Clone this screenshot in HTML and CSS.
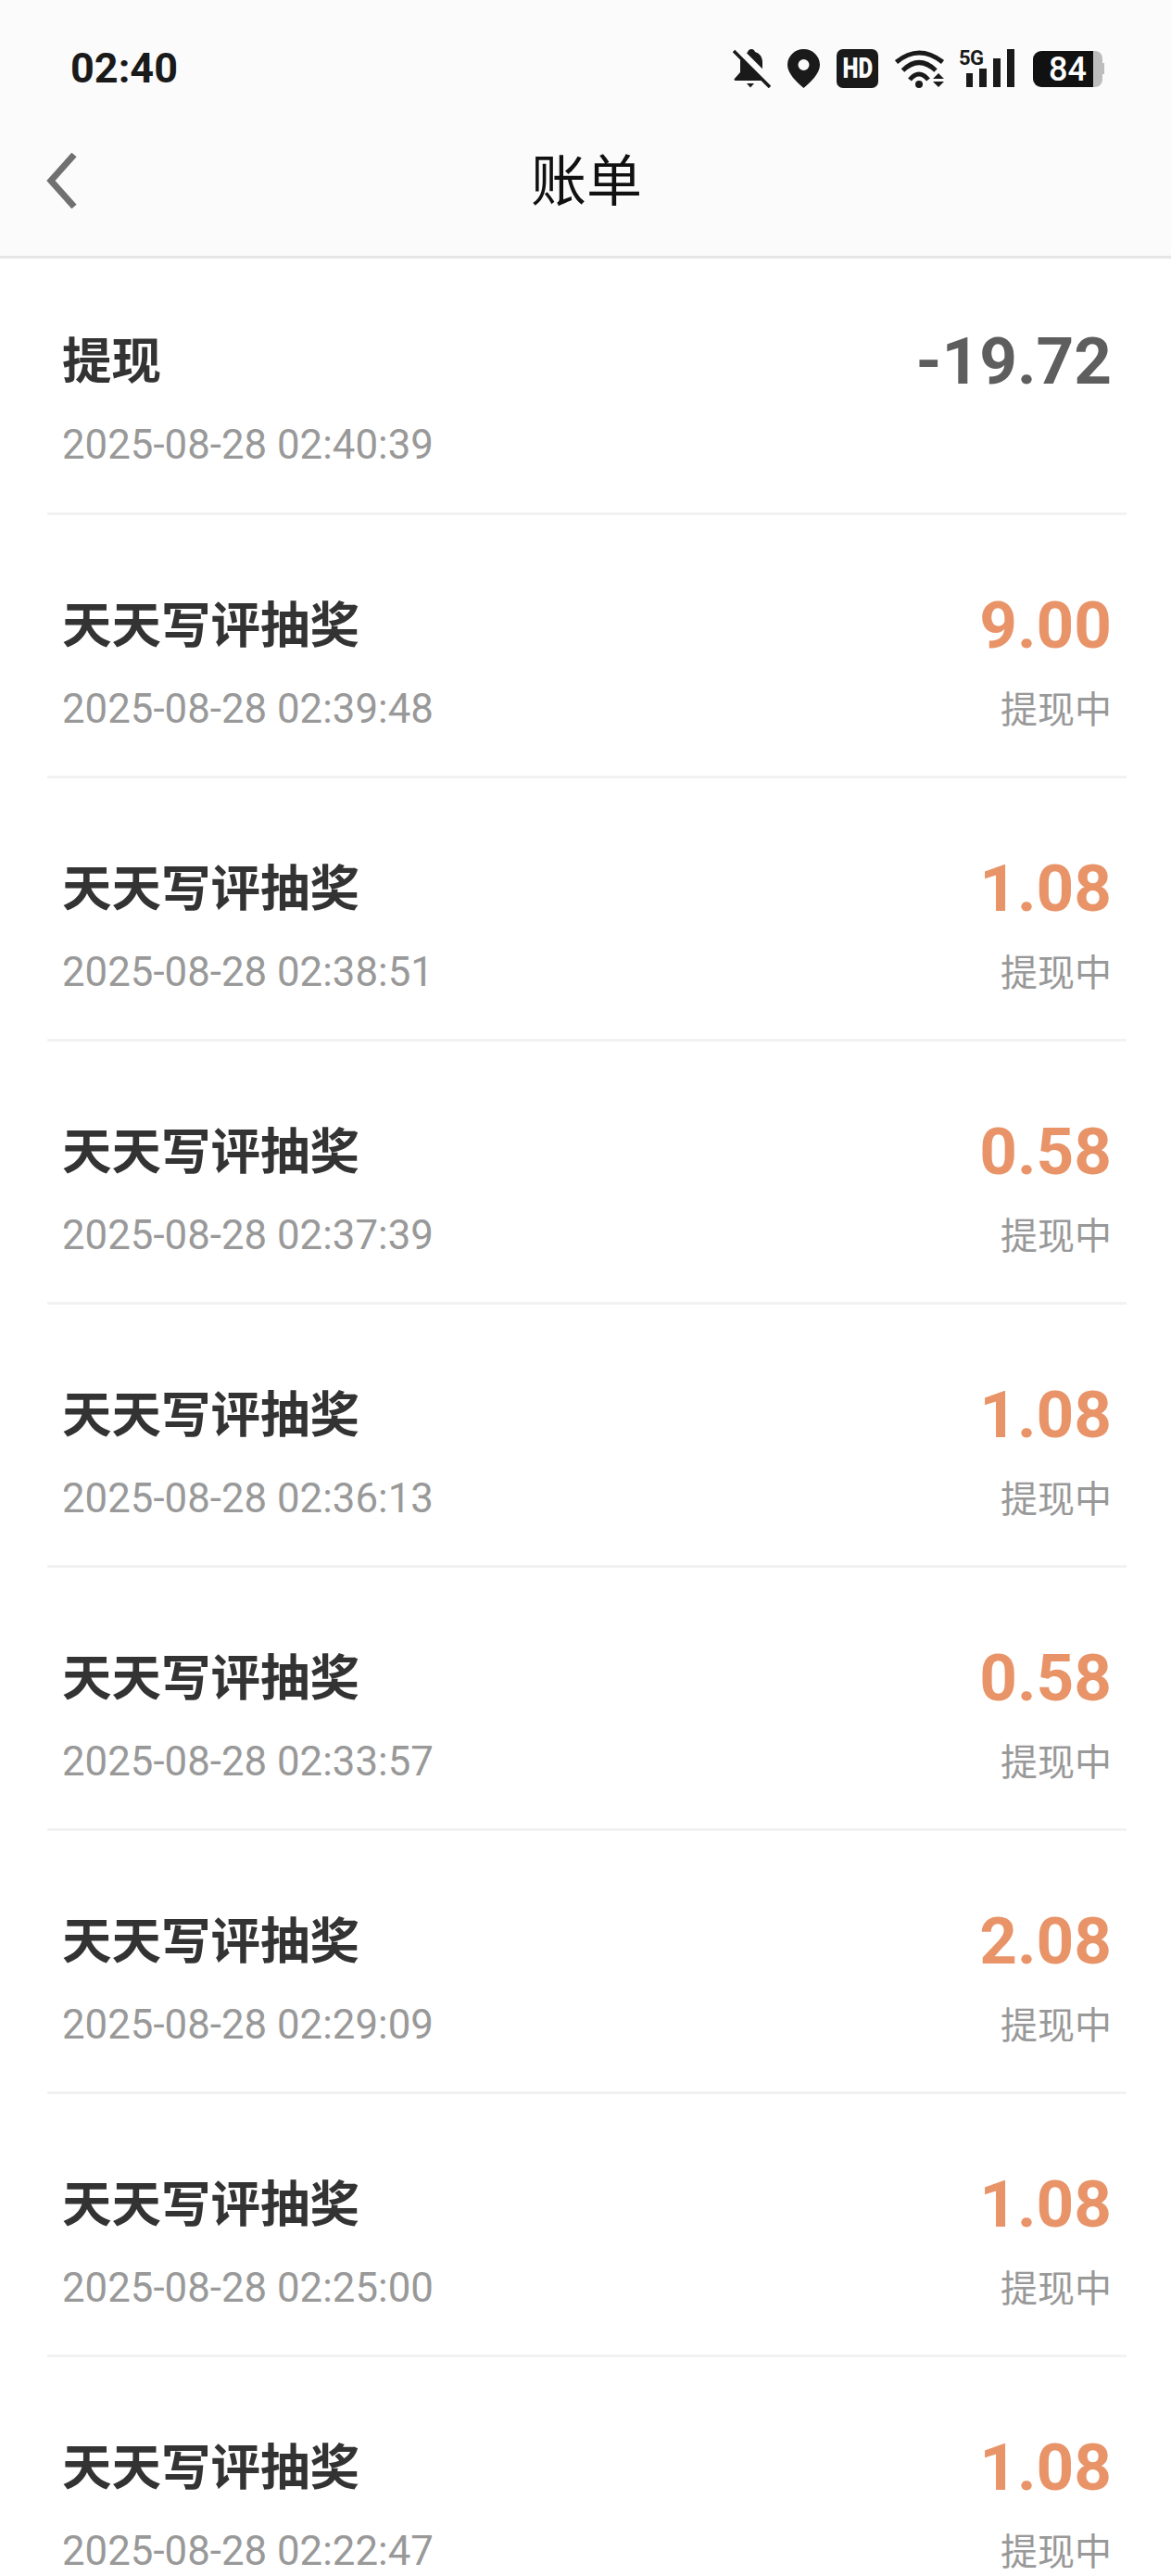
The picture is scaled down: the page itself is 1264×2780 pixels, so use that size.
FILE: index.html
```html
<!DOCTYPE html>
<html lang="zh-CN">
<head>
<meta charset="utf-8">
<title>账单</title>
<link rel="stylesheet" href="styles.css">
</head>
<body>
<header class="top">
  <div class="status">
    <span class="clock">02:40</span>
    <div class="status-icons">
      <svg class="ic" width="41" height="42" viewBox="0 0 41 42"><path fill="#1a1a1a" d="M20 0c2 0 3.500 1.200 4 3 5 1.500 8 5.500 8 11v11l5 7c.7 1.200 0 2-1 2H3c-1.500 0-2-1.200-1-2.300L8 25V14C8 9 11 5.500 16 3.500 16.500 1.300 18 0 20 0zM15 37h8l-4 4.500z"/><path stroke="#fbfbfb" stroke-width="8" d="M4 -1l38 38"/><path stroke="#1a1a1a" stroke-width="3.500" d="M1 2l39 39"/></svg>
      <svg class="ic" width="35" height="42" viewBox="0 0 35 42"><path fill="#1a1a1a" fill-rule="evenodd" d="M17.500 0C8 0 0 7.500 0 17c0 9.500 10 18.500 17.500 25C25 35.500 35 26.500 35 17 35 7.500 27 0 17.500 0zm0 11a6 6 0 1 1 0 12 6 6 0 0 1 0-12z"/></svg>
      <div class="hd"><span class="hd-text">HD</span></div>
      <svg class="ic" width="53" height="43" viewBox="0 0 53 43"><g fill="none" stroke="#1a1a1a" stroke-width="5"><path d="M1.500 14Q26 -6 51.500 14"/><path d="M8.500 23Q26 6 44 23"/><path d="M16 33Q26 21 36 33"/></g><circle cx="26" cy="38" r="4" fill="#1a1a1a"/><path fill="#1a1a1a" d="M41 32h12l-6-6zM41 35h12l-6 6z"/></svg>
      <div class="signal">
        <svg class="ic" width="60" height="42" viewBox="0 0 60 42"><path fill="#1a1a1a" d="M8 26h7v15H8zM22 21h8v20h-8zM37 10h8v31h-8zM52 0h8v41h-8z"/></svg>
        <span class="five-g">5G</span>
      </div>
      <div class="battery"><span class="batt-fill">84</span><span class="batt-rest"></span><span class="batt-tip"></span></div>
    </div>
  </div>
  <div class="nav">
    <svg class="back" width="38" height="60" viewBox="0 0 38 60"><path fill="none" stroke="#707070" stroke-width="7" d="M32 2L7 30l25 28"/></svg>
    <h1 class="title">账单</h1>
  </div>
</header>
<main class="list">
  <div class="row"><div class="left"><div class="name">提现</div><div class="time">2025-08-28 02:40:39</div></div><div class="right"><div class="amount out">-19.72</div></div></div>
  <div class="row"><div class="left"><div class="name">天天写评抽奖</div><div class="time">2025-08-28 02:39:48</div></div><div class="right"><div class="amount">9.00</div><div class="state">提现中</div></div></div>
  <div class="row"><div class="left"><div class="name">天天写评抽奖</div><div class="time">2025-08-28 02:38:51</div></div><div class="right"><div class="amount">1.08</div><div class="state">提现中</div></div></div>
  <div class="row"><div class="left"><div class="name">天天写评抽奖</div><div class="time">2025-08-28 02:37:39</div></div><div class="right"><div class="amount">0.58</div><div class="state">提现中</div></div></div>
  <div class="row"><div class="left"><div class="name">天天写评抽奖</div><div class="time">2025-08-28 02:36:13</div></div><div class="right"><div class="amount">1.08</div><div class="state">提现中</div></div></div>
  <div class="row"><div class="left"><div class="name">天天写评抽奖</div><div class="time">2025-08-28 02:33:57</div></div><div class="right"><div class="amount">0.58</div><div class="state">提现中</div></div></div>
  <div class="row"><div class="left"><div class="name">天天写评抽奖</div><div class="time">2025-08-28 02:29:09</div></div><div class="right"><div class="amount">2.08</div><div class="state">提现中</div></div></div>
  <div class="row"><div class="left"><div class="name">天天写评抽奖</div><div class="time">2025-08-28 02:25:00</div></div><div class="right"><div class="amount">1.08</div><div class="state">提现中</div></div></div>
  <div class="row"><div class="left"><div class="name">天天写评抽奖</div><div class="time">2025-08-28 02:22:47</div></div><div class="right"><div class="amount">1.08</div><div class="state">提现中</div></div></div>
</main>
</body>
</html>
```
FILE: styles.css
```css
* { box-sizing: border-box; }
html, body { margin: 0; padding: 0; }
body { width: 1264px; height: 2780px; overflow: hidden; background: #fff; font-family: Roboto, "Noto Sans CJK SC", sans-serif; }
.top { height: 279px; background: #fbfbfb; border-bottom: 3px solid #e6e6e6; }
.status { height: 146px; padding: 51px 72px 0 76px; display: flex; justify-content: space-between; align-items: flex-start; }
.clock { font-size: 45px; font-weight: 700; line-height: 46px; color: #1a1a1a; }
.status-icons { display: flex; align-items: center; gap: 18px; height: 46px; }
.ic { display: block; flex: none; }
.hd { width: 45px; height: 42px; border-radius: 7px; background: #1a1a1a; display: flex; align-items: center; justify-content: center; }
.hd-text { font-size: 31px; font-weight: 900; line-height: 42px; color: #fbfbfb; transform: scaleX(.78); }
.signal { position: relative; width: 60px; height: 42px; margin-left: -2px; margin-right: 2px; }
.five-g { position: absolute; left: 0; top: -1px; font-size: 22px; font-weight: 700; line-height: 22px; color: #1a1a1a; letter-spacing: -.5px; }
.battery { display: flex; align-items: center; }
.batt-fill { width: 65px; height: 39px; border-radius: 9px 0 0 9px; background: #111; color: #fff; font-size: 36px; font-weight: 500; line-height: 40px; text-align: right; padding-right: 7px; }
.batt-rest { width: 10px; height: 39px; border-radius: 0 8px 8px 0; background: #bdbdbd; }
.batt-tip { width: 2px; height: 12px; background: #bdbdbd; }
.nav { height: 130px; padding: 0 0 40px 2px; display: flex; align-items: center; justify-content: center; position: relative; }
.back { position: absolute; left: 48px; top: 19px; }
.title { margin: 0; font-size: 60px; font-weight: 400; color: #111; line-height: 80px; font-family: "Noto Sans CJK SC", sans-serif; }
.list { padding: 0 48px 0 51px; }
.row { height: 284px; padding: 80px 16px 0; border-bottom: 3px solid #f2f2f2; display: flex; justify-content: space-between; }
.row:first-child { height: 277px; padding-top: 72px; }
.name { font-family: "Noto Sans CJK SC", sans-serif; font-size: 53.5px; font-weight: 700; line-height: 70px; color: #333; }
.time { margin-top: 35px; font-size: 43.8px; line-height: 48px; color: #999; white-space: nowrap; }
.right { margin-top: -1px; text-align: right; }
.amount { font-size: 71px; font-weight: 700; line-height: 80px; color: #e89468; }
.amount.out { color: #5e5e5e; }
.state { margin-top: 24px; font-family: "Noto Sans CJK SC", sans-serif; font-size: 40px; line-height: 48px; color: #999; }
```
